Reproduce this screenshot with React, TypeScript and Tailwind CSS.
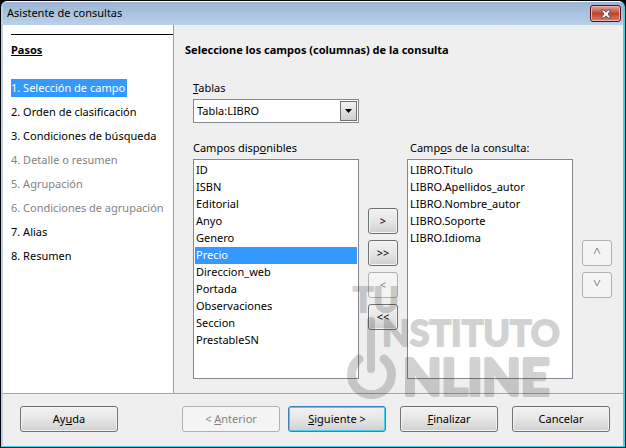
import React, { useState } from 'react';
import clsx from 'clsx';

const steps = [
  { label: 'Selección de campo' },
  { label: 'Orden de clasificación' },
  { label: 'Condiciones de búsqueda' },
  { label: 'Detalle o resumen', disabled: true },
  { label: 'Agrupación', disabled: true },
  { label: 'Condiciones de agrupación', disabled: true },
  { label: 'Alias' },
  { label: 'Resumen' },
];

const availableFields = [
  'ID',
  'ISBN',
  'Editorial',
  'Anyo',
  'Genero',
  'Precio',
  'Direccion_web',
  'Portada',
  'Observaciones',
  'Seccion',
  'PrestableSN',
];

const queryFields = [
  'LIBRO.Titulo',
  'LIBRO.Apellidos_autor',
  'LIBRO.Nombre_autor',
  'LIBRO.Soporte',
  'LIBRO.Idioma',
];

type ButtonProps = React.ButtonHTMLAttributes<HTMLButtonElement> & {
  primary?: boolean;
};

const DialogButton = ({ primary, className, ...props }: ButtonProps) => (
  <button
    type="button"
    className={clsx(
      'h-[26px] rounded-[3px] border text-center leading-4',
      props.disabled
        ? 'border-[#adb2b5] bg-[#f4f4f4] text-[#838383]'
        : 'bg-linear-to-b from-[#f2f2f2] from-0% via-[#e6e6e6] via-50% to-[#cfcfcf] text-black',
      !props.disabled &&
        (primary
          ? 'border-[#3c7fb1] shadow-[inset_0_0_0_1px_#48d1f7]'
          : 'border-[#707070] shadow-[inset_0_0_0_1px_#f5f5f5]'),
      className
    )}
    {...props}
  />
);

const Caret = ({ down }: { down?: boolean }) => (
  <svg viewBox="0 0 8 8" className="mx-auto mb-1 h-2 w-2" aria-hidden="true">
    <path
      d={down ? 'M1 1L4 7L7 1' : 'M1 7L4 1L7 7'}
      fill="none"
      stroke="#838383"
      strokeWidth="1"
    />
  </svg>
);

const Watermark = () => (
  <svg
    aria-hidden="true"
    viewBox="0 0 212 120"
    className="pointer-events-none absolute right-[65px] bottom-[-7px] h-[120px] w-[212px] overflow-visible opacity-20"
  >
    <g
      fill="#222"
      stroke="#222"
      strokeLinejoin="round"
      fontFamily="Lato, sans-serif"
      fontWeight="700"
    >
      <text x="7" y="32" fontSize="34" strokeWidth="2">TU</text>
      <text x="36" y="66" fontSize="36" strokeWidth="2">NSTITUTO</text>
      <text x="57" y="115" fontSize="50" strokeWidth="4">NLINE</text>
    </g>
    <path d="M25 41V89" stroke="#222" strokeWidth="8" strokeLinecap="round" fill="none" />
    <path
      d="M13 79A20 20 0 1 0 38 79"
      stroke="#222"
      strokeWidth="9"
      strokeLinecap="round"
      fill="none"
    />
  </svg>
);

const App = () => {
  const [step, setStep] = useState(0);

  return (
    <div className="flex min-h-screen flex-col bg-black p-px font-['Noto_Sans',sans-serif] text-[11px] text-black">
      <div className="flex flex-1 flex-col rounded-t-md border-t border-r-2 border-b border-l-2 border-t-white border-r-[#3fd0f5] border-b-[#3fd0f5] border-l-[#b9d1ea] bg-[#efefef]">
        <header className="flex h-[23px] items-center justify-between rounded-t bg-linear-to-b from-[#9ab4d1] to-[#b9d1ea] pr-0.5 pl-1">
          <h1>Asistente de consultas</h1>
          <button
            type="button"
            aria-label="Cerrar"
            className="flex h-[17px] w-[31px] items-center justify-center rounded-[3px] border border-[#4a1622] bg-linear-to-b from-[#e6a398] from-0% via-[#c4402a] via-50% to-[#d6806f] shadow-[inset_0_0_0_1px_#eab5ac]"
          >
            <svg viewBox="0 0 12 10" className="h-[10px] w-3">
              <path
                d="M1 1H4L6 3.2L8 1H11L8 5L11 9H8L6 6.8L4 9H1L4 5Z"
                fill="#fff"
                stroke="#505564"
                strokeWidth="1"
              />
            </svg>
          </button>
        </header>

        <div className="relative flex flex-1 border-b border-[#a0a0a0]">
          <nav className="w-[171px] shrink-0 border-r border-[#a0a0a0] bg-white pt-[9px] pl-2">
            <h2 className="border-t border-black pt-1.5 leading-[18px] font-bold underline">
              Pasos
            </h2>
            <ol className="mt-5 flex flex-col items-start gap-1.5">
              {steps.map((item, index) => (
                <li key={item.label}>
                  <button
                    type="button"
                    disabled={item.disabled}
                    onClick={() => setStep(index)}
                    className={clsx(
                      'block h-[18px] pr-0.5 leading-[18px] whitespace-nowrap',
                      item.disabled && 'text-[#838383]',
                      step === index && 'bg-[#3399ff] text-white'
                    )}
                  >
                    {index + 1}. {item.label}
                  </button>
                </li>
              ))}
            </ol>
          </nav>

          <main className="flex flex-1 flex-col pt-4 pr-[11px] pb-[14px] pl-[19px] leading-[18px]">
            <h2 className="-ml-2 font-bold">
              Seleccione los campos (columnas) de la consulta
            </h2>

            <div className="mt-5 grid flex-1 grid-cols-[1fr_30px_1fr_30px] grid-rows-[auto_auto_auto_1fr] gap-x-[9px]">
              <label htmlFor="tablas" className="col-span-4 pb-0.5">
                <u>T</u>ablas
              </label>
              <div className="relative">
                <select
                  id="tablas"
                  className="block h-6 w-full appearance-none border border-[#828790] bg-white pl-[3px]"
                >
                  <option>Tabla:LIBRO</option>
                </select>
                <span className="pointer-events-none absolute top-0.5 right-0.5 flex h-5 w-[17px] items-center justify-center border border-[#707070] bg-linear-to-b from-[#f2f2f2] to-[#cfcfcf]">
                  <svg viewBox="0 0 7 4" className="h-1 w-[7px]">
                    <path d="M0 0H7L3.5 4Z" fill="#000" />
                  </svg>
                </span>
              </div>

              <label htmlFor="disponibles" className="col-start-1 pt-4 pb-0.5">
                Campos disp<u>o</u>nibles
              </label>
              <label htmlFor="consulta" className="col-start-3 pt-4 pb-0.5 pl-[3px]">
                Camp<u>o</u>s de la consulta:
              </label>

              <select
                id="disponibles"
                size={12}
                defaultValue="Precio"
                className="col-start-1 h-full min-h-[220px] w-full overflow-hidden border border-[#828790] bg-white px-px pt-0.5 pb-px"
              >
                {availableFields.map((field) => (
                  <option
                    key={field}
                    className="h-[17px] min-h-0 px-px py-0 leading-[17px] checked:bg-[#3399ff] checked:bg-linear-to-b checked:from-[#3399ff] checked:to-[#3399ff] checked:text-white!"
                  >
                    {field}
                  </option>
                ))}
              </select>
              <div className="flex flex-col justify-center gap-1.5">
                <DialogButton>&gt;</DialogButton>
                <DialogButton>&gt;&gt;</DialogButton>
                <DialogButton disabled>&lt;</DialogButton>
                <DialogButton>&lt;&lt;</DialogButton>
              </div>
              <select
                id="consulta"
                size={12}
                className="h-full min-h-[220px] w-full overflow-hidden border border-[#828790] bg-white px-px pt-0.5 pb-px"
              >
                {queryFields.map((field) => (
                  <option key={field} className="h-[17px] min-h-0 px-px py-0 leading-[17px]">
                    {field}
                  </option>
                ))}
              </select>
              <div className="flex flex-col justify-center gap-1.5">
                <DialogButton disabled aria-label="Subir">
                  <Caret />
                </DialogButton>
                <DialogButton disabled aria-label="Bajar">
                  <Caret down />
                </DialogButton>
              </div>
            </div>
          </main>

          <Watermark />
        </div>

        <footer className="flex gap-[14px] border-t border-[#f5f5f5] pt-[11px] pr-[13px] pb-[14px] pl-[17px]">
          <DialogButton className="mr-auto w-[98px]">
            Ay<u>u</u>da
          </DialogButton>
          <div className="flex gap-2">
            <DialogButton disabled className="w-[98px]">
              &lt; <u>A</u>nterior
            </DialogButton>
            <DialogButton primary className="w-[98px]">
              <u>S</u>iguiente &gt;
            </DialogButton>
          </div>
          <DialogButton className="w-[98px]">
            <u>F</u>inalizar
          </DialogButton>
          <DialogButton className="w-[98px]">Cancelar</DialogButton>
        </footer>
      </div>
    </div>
  );
};

export default App;
